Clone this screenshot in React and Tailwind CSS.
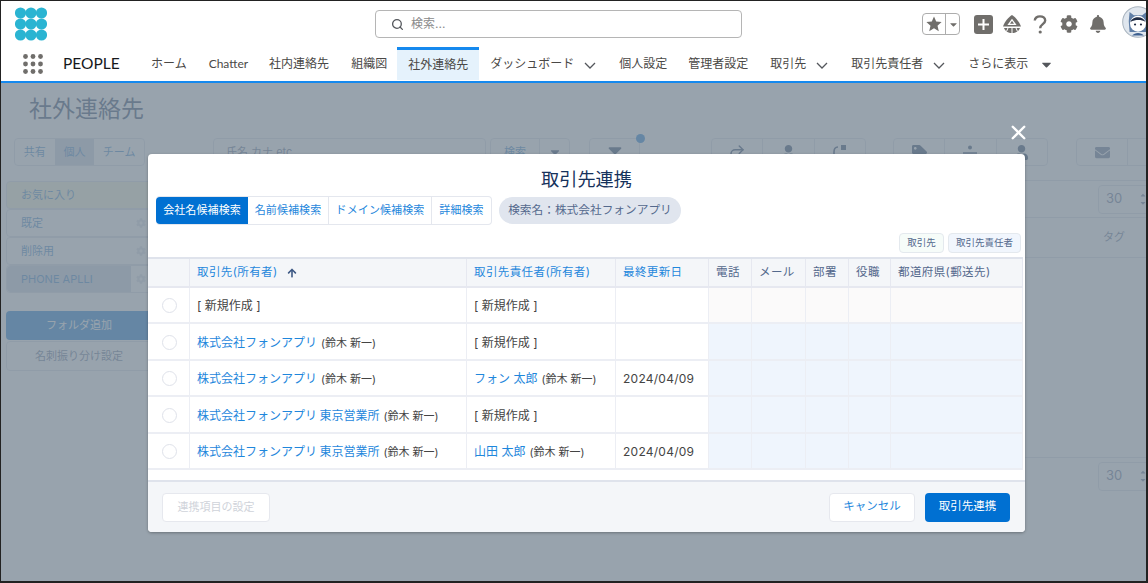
import { Search, Redo2, X } from "lucide-react";
import { FaCog, FaBell, FaCaretDown, FaCaretUp, FaUser, FaTag, FaEnvelope, FaArrowUp } from "react-icons/fa";

function Logo() {
  const spots = [0, 1, 2];
  return (
    <svg width="32" height="34" viewBox="0 0 32 34" className="shrink-0">
      {spots.map((r) =>
        spots.map((c) => (
          <circle key={`${r}-${c}`} cx={5.5 + c * 10.5} cy={6 + r * 11} r="5.6" fill="#2ab4d2" />
        ))
      )}
    </svg>
  );
}

function Launcher() {
  const spots = [0, 1, 2];
  return (
    <svg width="20" height="20" viewBox="0 0 20 20" className="shrink-0">
      {spots.map((r) =>
        spots.map((c) => (
          <circle key={`${r}-${c}`} cx={2.5 + c * 7.5} cy={2.5 + r * 7.5} r="2.4" fill="#706e6b" />
        ))
      )}
    </svg>
  );
}

function Chevron() {
  return (
    <div className="flex h-[33px] items-center">
      <svg width="16" height="16" viewBox="0 0 16 16" className="-ml-[3px] mr-[10px] mt-[3px] shrink-0">
        <path d="M3 6l5 5 5-5" fill="none" stroke="#54575c" strokeWidth="1.3" />
      </svg>
    </div>
  );
}

function StarIcon() {
  return (
    <svg width="16" height="16" viewBox="0 0 16 16">
      <polygon points="8,0.5 10.2,5.6 15.6,6.1 11.5,9.7 12.8,15.2 8,12.3 3.2,15.2 4.5,9.7 0.4,6.1 5.8,5.6" fill="#706e6b" />
    </svg>
  );
}

function TrailIcon() {
  return (
    <svg width="20" height="20" viewBox="0 0 20 20">
      <path d="M10 1C13 2.6 18 8.5 19 12.5H1C2 8.5 7 2.6 10 1Z" fill="#706e6b" />
      <path d="M10 4.8L14.6 11H5.4Z" fill="#fff" />
      <path d="M10 6.8L12 9.8H8Z" fill="#706e6b" />
      <path d="M2 14H18C17 17 14 19 10 19C6 19 3 17 2 14Z" fill="#706e6b" />
      <path d="M10 14V19M6 14L4.5 17.5M14 14L15.5 17.5" stroke="#fff" strokeWidth="1" />
    </svg>
  );
}

function HelpIcon() {
  return (
    <svg width="14" height="19" viewBox="0 0 14 19" className="ml-[11px] shrink-0">
      <path d="M1.8 5.6C1.8 3 4 1.4 7 1.4c3 0 5.2 1.6 5.2 4.1 0 3.6-5 3.8-5 7.7" fill="none" stroke="#706e6b" strokeWidth="2.4" />
      <circle cx="7.2" cy="17" r="1.6" fill="#706e6b" />
    </svg>
  );
}

function Avatar() {
  return (
    <svg width="32" height="32" viewBox="0 0 38 38" className="shrink-0">
      <circle cx="19" cy="19" r="18.2" fill="#dfe6ee" stroke="#a9b4bf" strokeWidth="1.2" />
      <path d="M9 7l5 4h10l5-4 1 11-1 13H9L8 18z" fill="#5f7ea6" />
      <circle cx="19" cy="21" r="9.5" fill="#fff" />
      <path d="M10 19c2-7 15-8 18 0-5-3-12-3-18 0z" fill="#1d2a44" />
      <circle cx="15.5" cy="22" r="1.3" fill="#1d2a44" />
      <circle cx="22.5" cy="22" r="1.3" fill="#1d2a44" />
      <path d="M12 35c3-4 11-4 14 0z" fill="#3d5f8f" />
    </svg>
  );
}

function Header() {
  return (
    <div className="flex h-[47px] items-center bg-white pl-[15px] pt-[1px]">
      <Logo />
      <div className="ml-[328px] flex h-[28px] w-[367px] shrink-0 items-center rounded border border-[#b5b5b5] pl-[15px]">
        <Search size={13} strokeWidth={2.4} className="text-[#54575c]" />
        <span className="ml-[7px] text-[12px] text-[#8a8a8a]">検索...</span>
      </div>
      <div className="ml-[180px] flex h-[22px] w-[38px] shrink-0 items-center rounded border border-[#adadad]">
        <div className="flex h-full w-[23px] items-center justify-center border-r border-[#adadad]">
          <StarIcon />
        </div>
        <FaCaretDown size={11} className="ml-[2px] text-[#706e6b]" />
      </div>
      <div className="ml-[14px] flex h-[19px] w-[19px] shrink-0 items-center justify-center rounded-[3px] bg-[#706e6b]">
        <svg width="13" height="13" viewBox="0 0 13 13">
          <path d="M6.5 1v11M1 6.5h11" stroke="#fff" strokeWidth="2" />
        </svg>
      </div>
      <div className="ml-[9px] shrink-0">
        <TrailIcon />
      </div>
      <HelpIcon />
      <FaCog size={18} className="ml-[13px] shrink-0 text-[#706e6b]" />
      <FaBell size={18} className="ml-[11px] shrink-0 text-[#706e6b]" />
      <div className="-mt-[4px] ml-[15px] shrink-0">
        <Avatar />
      </div>
    </div>
  );
}

function NavItem({ label, active, className }) {
  if (active) {
    return (
      <div className="flex h-[33px] items-center border-t-[3px] border-[#1589ee] bg-[#e5f2fc] px-[11px]">
        {label}
      </div>
    );
  }
  return <div className={`flex h-[33px] items-center pt-[1px] ${className || "px-[11px]"}`}>{label}</div>;
}

function Nav() {
  return (
    <div className="flex h-[36px] items-start border-b-2 border-[#1589ee] bg-white pl-[23px] font-['Lato','Noto_Sans_CJK_JP',sans-serif] text-[12px] leading-none text-[#4a4846]">
      <div className="flex h-[33px] items-center">
        <Launcher />
        <span className="ml-[20px] mt-[1px] w-[55px] text-[15.5px] text-[#16181c]">PEOPLE</span>
      </div>
      <div className="ml-[22px] flex whitespace-nowrap">
        <NavItem label="ホーム" />
        <NavItem label="Chatter" className="pl-[11px] pr-[10px]" />
        <NavItem label="社内連絡先" />
        <NavItem label="組織図" className="pl-[11px] pr-[10px]" />
        <NavItem label="社外連絡先" active />
        <NavItem label="ダッシュボード" />
        <Chevron />
        <NavItem label="個人設定" className="pl-[11px] pr-[10px]" />
        <NavItem label="管理者設定" />
        <NavItem label="取引先" />
        <Chevron />
        <NavItem label="取引先責任者" />
        <Chevron />
        <NavItem label="さらに表示" />
        <FaCaretDown size={15} className="mt-[10px] text-[#54575c]" />
      </div>
    </div>
  );
}

function ToolBox({ className, children }) {
  return (
    <div className={`flex h-[28px] shrink-0 items-center rounded border border-[#d8dde6] bg-white text-[#16325c] ${className}`}>
      {children}
    </div>
  );
}

function ToolCell({ children, last }) {
  return (
    <div className={`flex h-full flex-1 items-center justify-center ${last ? "" : "border-r border-[#d8dde6]"}`}>
      {children}
    </div>
  );
}

function FolderRow({ label, tone, selected }) {
  return (
    <div className={`flex h-[28px] items-center rounded border border-[#d8dde6] ${tone || "bg-white"}`}>
      <div className={`flex h-full flex-1 items-center rounded-l pl-[14px] ${selected ? "bg-[#c5d0e2]" : ""}`}>
        <span className="text-[11px] text-[#2a7bc4]">{label}</span>
      </div>
      {label !== "お気に入り" && <FaCog size={10} className="ml-[5px] mr-[5px] text-[#d8dde6]" />}
    </div>
  );
}

function SpinBox() {
  return (
    <div className="-mr-[10px] flex h-[29px] w-[60px] shrink-0 items-center justify-between rounded border border-[#d8dde6] pl-[7px] pr-[10px] text-[13px] text-[#54698d]">
      30
      <div className="flex flex-col">
        <FaCaretUp size={8} />
        <FaCaretDown size={8} />
      </div>
    </div>
  );
}

function Page() {
  return (
    <div className="bg-white">
      <div className="h-[55px] pl-[29px] pt-[10px] text-[23px] leading-[32px] text-[#16325c]">社外連絡先</div>
      <div className="flex pl-[14px]">
        <div className="flex h-[28px] w-[131px] shrink-0 items-center rounded border border-[#d8dde6] text-[11px] text-[#2a7bc4]">
          <div className="flex h-full w-[40px] items-center justify-center">共有</div>
          <div className="flex h-full w-[40px] items-center justify-center bg-[#c5d0e2]">個人</div>
          <div className="flex h-full w-[50px] items-center justify-center">チーム</div>
        </div>
        <div className="ml-[68px] flex h-[28px] w-[273px] shrink-0 items-center rounded border border-[#d8dde6] pl-[12px] text-[11px] text-[#54698d]">
          氏名 カナ etc
        </div>
        <ToolBox className="ml-[4px] w-[80px] text-[11px]">
          <ToolCell><span className="text-[#2a7bc4]">検索</span></ToolCell>
          <div className="flex h-full w-[29px] items-center justify-center">
            <FaCaretDown size={14} />
          </div>
        </ToolBox>
        <div className="relative ml-[19px] shrink-0">
          <ToolBox className="w-[51px] justify-center">
            <FaCaretDown size={22} className="-mt-[4px] text-[#16325c]" />
          </ToolBox>
          <div className="absolute -right-[5px] -top-[4px] h-[9px] w-[9px] rounded-full bg-[#0070d2]" />
        </div>
        <ToolBox className="ml-[71px] w-[155px]">
          <ToolCell><Redo2 size={18} /></ToolCell>
          <ToolCell><FaUser size={15} /></ToolCell>
          <ToolCell last>
            <svg width="16" height="16" viewBox="0 0 16 16">
              <rect x="9" y="1" width="5" height="5" fill="#16325c" />
              <path d="M6 3C3 3 2 5 2 8v6" fill="none" stroke="#16325c" strokeWidth="1.6" />
            </svg>
          </ToolCell>
        </ToolBox>
        <ToolBox className="ml-[27px] w-[155px]">
          <ToolCell><FaTag size={15} /></ToolCell>
          <ToolCell>
            <svg width="16" height="16" viewBox="0 0 16 16">
              <circle cx="8" cy="3.5" r="2" fill="#16325c" />
              <path d="M1 9h14" stroke="#16325c" strokeWidth="1.5" />
            </svg>
          </ToolCell>
          <ToolCell last><FaUser size={15} /></ToolCell>
        </ToolBox>
        <ToolBox className="ml-[28px] w-[80px]">
          <div className="flex h-full w-[51px] items-center justify-center border-r border-[#d8dde6]">
            <FaEnvelope size={15} className="text-[#54698d]" />
          </div>
        </ToolBox>
      </div>
      <div className="flex">
        <div className="w-[152px] shrink-0 pl-[6px]">
          <div className="mt-[15px] flex flex-col">
            <FolderRow label="お気に入り" tone="bg-[#f4f3d4]" />
            <FolderRow label="既定" />
            <FolderRow label="削除用" />
            <FolderRow label="PHONE APLLI" selected />
          </div>
          <div className="mt-[18px] flex h-[29px] items-center justify-center rounded bg-[#0070d2] text-[11px] text-white">フォルダ追加</div>
          <div className="mt-[1px] flex h-[30px] items-center justify-center rounded border border-[#d8dde6] text-[11px] text-[#54698d]">名刺振り分け設定</div>
          <div className="h-[300px]" />
        </div>
        <div className="flex flex-1 flex-col pt-[14px]">
          <div className="flex h-[37px] items-center justify-end border-t border-[#d8dde6]">
            <SpinBox />
          </div>
          <div className="flex h-[41px] items-center justify-end border-y border-[#d8dde6] pr-[23px] text-[11px] text-[#54698d]">タグ</div>
          <div className="h-[199px]" />
          <div className="flex h-[37px] items-center justify-end border-t border-[#d8dde6]">
            <SpinBox />
          </div>
        </div>
      </div>
    </div>
  );
}

const rows = [
  { h: "h-[36px]", company: null, contact: null, date: "", tint: "bg-[#fbfafa]" },
  { h: "h-[37px]", company: "株式会社フォンアプリ", contact: null, date: "", tint: "bg-[#eff5fd]" },
  { h: "h-[36px]", company: "株式会社フォンアプリ", contact: "フォン 太郎", date: "2024/04/09", tint: "bg-[#eff5fd]" },
  { h: "h-[37px]", company: "株式会社フォンアプリ 東京営業所", contact: null, date: "", tint: "bg-[#eff5fd]" },
  { h: "h-[36px]", company: "株式会社フォンアプリ 東京営業所", contact: "山田 太郎", date: "2024/04/09", tint: "bg-[#eff5fd]" },
];

function NameCell({ name, tight }) {
  if (!name) return <span className="text-[12px] text-[#444]">[ 新規作成 ]</span>;
  return (
    <span className="whitespace-nowrap text-[12px] text-[#1f87dc]">
      <span className={tight ? "[word-spacing:-1px]" : ""}>{name}</span>
      <span className="ml-[4px] text-[11px] text-[#444]">(鈴木 新一)</span>
    </span>
  );
}

function LinkTable() {
  const cell = "border-b-2 border-r border-[#eceef4] pl-[7px] align-middle";
  const head = "border-b-2 border-r border-[#e6e8f0] bg-[#f4f6f9] pl-[7px] text-left text-[11.5px] font-normal tracking-[0.4px]";
  return (
    <table className="w-[875px] table-fixed border-separate border-spacing-0 border-t-2 border-[#dfe3ec]">
      <colgroup>
        <col className="w-[42px]" />
        <col className="w-[277px]" />
        <col className="w-[149px]" />
        <col className="w-[93px]" />
        <col className="w-[43px]" />
        <col className="w-[54px]" />
        <col className="w-[43px]" />
        <col className="w-[42px]" />
        <col className="w-[132px]" />
      </colgroup>
      <thead>
        <tr className="h-[29px]">
          <th className={head} />
          <th className={`${head} text-[#1f87dc]`}>
            取引先(所有者)
            <FaArrowUp size={10} className="ml-[9px] inline text-[#3b5783]" />
          </th>
          <th className={`${head} text-[#1f87dc]`}>取引先責任者(所有者)</th>
          <th className={`${head} text-[#1f87dc]`}>最終更新日</th>
          <th className={`${head} text-[#54698d]`}>電話</th>
          <th className={`${head} text-[#54698d]`}>メール</th>
          <th className={`${head} text-[#54698d]`}>部署</th>
          <th className={`${head} text-[#54698d]`}>役職</th>
          <th className={`${head} text-[#54698d]`}>都道府県(郵送先)</th>
        </tr>
      </thead>
      <tbody>
        {rows.map((row, i) => (
          <tr key={i} className={row.h}>
            <td className={`${cell} pl-[14px]`}>
              <div className="mt-[1px] h-[15px] w-[15px] rounded-full border border-[#dfe2ea] bg-white" />
            </td>
            <td className={`${cell} pb-[2px]`}>
              <NameCell name={row.company} tight />
            </td>
            <td className={`${cell} pb-[2px]`}>
              <NameCell name={row.contact} />
            </td>
            <td className={`${cell} pt-[1px] text-[12px] tracking-[0.25px] text-[#444]`}>{row.date}</td>
            <td className={`${cell} ${row.tint}`} />
            <td className={`${cell} ${row.tint}`} />
            <td className={`${cell} ${row.tint}`} />
            <td className={`${cell} ${row.tint}`} />
            <td className={`${cell} ${row.tint}`} />
          </tr>
        ))}
      </tbody>
    </table>
  );
}

function SearchTab({ label, active, className }) {
  return (
    <div
      className={`flex h-full items-center justify-center text-[11px] tracking-[0.1px] ${
        active ? "rounded-l bg-[#0070d2] text-white" : "text-[#1f87dc]"
      } ${className}`}
    >
      {label}
    </div>
  );
}

function Modal() {
  return (
    <div className="absolute left-[148px] top-[154px] z-20 flex h-[378px] w-[877px] flex-col rounded bg-white shadow-[0_1px_3px_rgba(0,0,0,0.3)]">
      <div className="pt-[12px] text-center text-[18.2px] leading-[26px] text-[#16325c]">取引先連携</div>
      <div className="ml-[8px] mt-[4px] flex items-center">
        <div className="flex h-[29px] w-[336px] rounded border border-l-0 border-[#e4e7ee]">
          <SearchTab label="会社名候補検索" active className="w-[92px]" />
          <SearchTab label="名前候補検索" className="w-[81px] border-r border-[#e4e7ee]" />
          <SearchTab label="ドメイン候補検索" className="w-[103px] border-r border-[#e4e7ee]" />
          <SearchTab label="詳細検索" className="w-[59px]" />
        </div>
        <div className="ml-[7px] flex h-[27px] w-[182px] items-center justify-center rounded-full bg-[#e0e5ee] text-[11.7px] text-[#54698d]">
          検索名：株式会社フォンアプリ
        </div>
      </div>
      <div className="mr-[4px] mt-[8px] flex justify-end gap-[4px] text-[9.5px] text-[#54698d]">
        <div className="flex h-[20px] w-[45px] items-center justify-center rounded border border-[#e4e9ee] bg-[#f6fcf9]">取引先</div>
        <div className="flex h-[20px] w-[73px] items-center justify-center rounded border border-[#e4e9ee] bg-[#f1f6fd]">取引先責任者</div>
      </div>
      <div className="mt-[4px] flex-1">
        <LinkTable />
      </div>
      <div className="flex h-[52px] items-center justify-between rounded-b border-t-2 border-[#dfe3ec] bg-[#f4f6f9] pl-[14px] pr-[15px] text-[11.5px]">
        <div className="flex h-[29px] w-[108px] items-center justify-center rounded border border-[#e6e8ee] bg-white text-[11px] text-[#cfd3da]">
          連携項目の設定
        </div>
        <div className="flex gap-[10px]">
          <div className="flex h-[29px] w-[86px] items-center justify-center rounded border border-[#e6e8ee] bg-white text-[#1f87dc]">キャンセル</div>
          <div className="flex h-[29px] w-[85px] items-center justify-center rounded bg-[#0070d2] text-white">取引先連携</div>
        </div>
      </div>
    </div>
  );
}

export default function App() {
  return (
    <div className="relative h-[583px] w-[1148px] overflow-hidden bg-white font-['Inter','Noto_Sans_CJK_JP',sans-serif]">
      <Header />
      <Nav />
      <Page />
      <div className="absolute inset-x-0 bottom-0 top-[83px] z-10 bg-[#7e8c99]/80" />
      <X size={23} strokeWidth={2.5} className="absolute left-[1007px] top-[121px] z-20 text-white" />
      <Modal />
      <div className="pointer-events-none absolute inset-0 z-30 border border-b-2 border-r-2 border-[#222]" />
    </div>
  );
}
